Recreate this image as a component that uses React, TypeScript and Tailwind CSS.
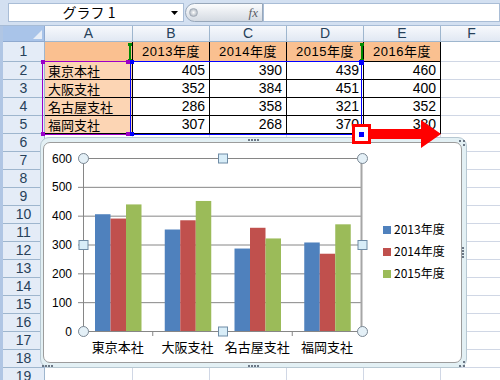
import React from 'react';

const cols = ['A', 'B', 'C', 'D', 'E', 'F'];

const table = [
  ['', '2013年度', '2014年度', '2015年度', '2016年度'],
  ['東京本社', '405', '390', '439', '460'],
  ['大阪支社', '352', '384', '451', '400'],
  ['名古屋支社', '286', '358', '321', '352'],
  ['福岡支社', '307', '268', '370', '380'],
];

const branches = ['東京本社', '大阪支社', '名古屋支社', '福岡支社'];
const series = [
  { name: '2013年度', color: '#4f81bd', values: [405, 352, 286, 307] },
  { name: '2014年度', color: '#c0504d', values: [390, 384, 358, 268] },
  { name: '2015年度', color: '#9bbb59', values: [439, 451, 321, 370] },
];

// plot area in page coordinates
const X0 = 83;
const X1 = 362;
const Y0 = 157;
const Y1 = 330;
const catW = (X1 - X0) / 4;
const yOf = (v: number) => Y1 - (v / 600) * (Y1 - Y0);

const Cell = ({ r, c }: { r: number; c: number }) => {
  const inTable = r <= 5 && c <= 4;
  const text = inTable ? table[r - 1][c] : '';
  let cls = 'border-r border-b border-[#d0d7e5] bg-white';
  if (inTable) {
    if (r === 1)
      cls =
        "border-r border-b border-black bg-[#fac090] justify-center tracking-[0.5px] font-['Liberation_Sans','Noto_Sans_CJK_JP',sans-serif]";
    else if (c === 0) cls = 'border-r border-b border-black bg-[#fcd5b4] justify-start pl-[3px]';
    else
      cls =
        "border-r border-b border-black bg-white justify-end pr-[4px] text-[14px] font-['Liberation_Sans',sans-serif]";
  }
  return (
    <div className={`${cls} flex items-center text-[13px] leading-[15px] text-black whitespace-nowrap`}>
      {text}
    </div>
  );
};

const Chart = () => (
  <svg className="absolute inset-0" width="418" height="223" viewBox="44 142 418 223">
    {[0, 100, 200, 300, 400, 500, 600].map((v) => (
      <g key={v}>
        <line x1={X0 - 5} x2={X1} y1={yOf(v) + 0.5} y2={yOf(v) + 0.5} stroke="#868686" strokeWidth="1" />
        <text
          x={72}
          y={yOf(v) + 4.5}
          textAnchor="end"
          fontSize="12"
          fontFamily="'Liberation Sans', Arial, sans-serif"
          fill="#000"
        >
          {v}
        </text>
      </g>
    ))}
    {series.map((s, si) =>
      s.values.map((v, ci) => {
        const x = X0 + ci * catW + 12 + si * 15.5;
        return <rect key={`${si}-${ci}`} x={x} y={yOf(v)} width={15.5} height={Y1 - yOf(v)} fill={s.color} />;
      }),
    )}
    <line x1={X0 + 0.5} x2={X0 + 0.5} y1={Y0} y2={Y1} stroke="#868686" />
    <line x1={X1 - 0.5} x2={X1 - 0.5} y1={Y0} y2={Y1} stroke="#a6a6a6" strokeWidth="2" />
    {[1, 2, 3].map((i) => (
      <line key={i} x1={X0 + i * catW} x2={X0 + i * catW} y1={Y1} y2={Y1 + 5} stroke="#868686" />
    ))}
    {branches.map((b, i) => (
      <text
        key={b}
        x={X0 + i * catW + catW / 2}
        y={351}
        textAnchor="middle"
        fontSize="13"
        fontFamily="'Noto Sans CJK JP', sans-serif"
        fill="#000"
      >
        {b}
      </text>
    ))}
    {series.map((s, i) => (
      <g key={s.name}>
        <rect x={383} y={225 + i * 22} width={8} height={8} fill={s.color} />
        <text x={394} y={233 + i * 22} fontSize="12" fontFamily="'Noto Sans CJK JP', sans-serif" fill="#000">
          {s.name}
        </text>
      </g>
    ))}
    {[
      [X0, Y0],
      [X1, Y0],
      [X0, Y1],
      [X1, Y1],
    ].map(([x, y], i) => (
      <circle key={i} cx={x + 0.5} cy={y + 0.5} r={5} fill="#e4f0f7" stroke="#7b8894" />
    ))}
    {[
      [(X0 + X1) / 2, Y0],
      [(X0 + X1) / 2, Y1],
      [X0, (Y0 + Y1) / 2],
      [X1, (Y0 + Y1) / 2],
    ].map(([x, y], i) => (
      <rect key={i} x={x - 4} y={y - 4} width={9} height={9} fill="#d8edf8" stroke="#6f8ca6" />
    ))}
  </svg>
);

const Dots = ({ className }: { className: string }) => (
  <div className={`absolute flex gap-[1px] ${className}`}>
    <span className="w-[2px] h-[2px] bg-[#6b7785]" />
    <span className="w-[2px] h-[2px] bg-[#6b7785]" />
    <span className="w-[2px] h-[2px] bg-[#6b7785]" />
    <span className="w-[2px] h-[2px] bg-[#6b7785]" />
  </div>
);

export default function App() {
  const sheetRows = Array.from({ length: 19 }, (_, i) => i + 1);
  return (
    <div className="relative w-[500px] h-[380px] overflow-hidden bg-white font-['Noto_Sans_CJK_JP',sans-serif]">
      {/* formula bar */}
      <div className="h-[26px] bg-[#d3e0f1] border-b border-[#a7bcd6] flex items-start pt-[3px] pl-[8px]">
        <div className="w-[176px] h-[19px] bg-white border border-[#a9bdd6] flex items-center">
          <span className="flex-1 text-center text-[14px] leading-[17px] pl-[4px]">グラフ 1</span>
          <span className="w-[18px] flex justify-center">
            <svg width="7" height="4" viewBox="0 0 7 4">
              <path d="M0 0h7L3.5 4z" fill="#000" />
            </svg>
          </span>
        </div>
        <div className="ml-[1px] w-[78px] h-[19px] rounded-l-full border border-[#97a7ba] bg-linear-to-b from-[#fbfcfd] to-[#d5dbe3] flex items-center justify-between pl-[3px] pr-[4px]">
          <span className="w-[9px] h-[9px] rounded-full bg-radial from-[#ffffff] to-[#9aa4b0] border border-[#a4adb8]" />
          <span className="font-['Liberation_Serif',serif] italic text-[13px] leading-none text-[#5a5f66]">fx</span>
        </div>
        <div className="flex-1 h-[19px] bg-white border border-[#a9bdd6]" />
      </div>

      {/* sheet grid */}
      <div className="grid grid-cols-[42px_88px_77px_77px_77px_77px_62px] grid-rows-[16px_20px_repeat(18,18px)] border-l-[3px] border-[#b0c6e4]">
        <div className="bg-[#a9c4e9] border-r border-b border-[#8faad0] flex items-end justify-end p-[2px]">
          <svg width="9" height="9" viewBox="0 0 9 9">
            <path d="M9 0v9H0z" fill="#e8eef7" />
          </svg>
        </div>
        {cols.map((c) => (
          <div
            key={c}
            className="bg-linear-to-b from-[#f7f9fc] to-[#e1e8f3] border-r border-b border-[#9eb6ce] text-center text-[14px] leading-[15px] text-[#27415a] font-['Liberation_Sans',sans-serif]"
          >
            {c}
          </div>
        ))}
        {sheetRows.map((r) => (
          <React.Fragment key={r}>
            <div className="bg-[#e4ecf7] border-r border-b border-[#9eb6ce] flex items-center justify-center text-[14px] leading-[15px] text-[#27415a] font-['Liberation_Sans',sans-serif]">
              {r}
            </div>
            {[0, 1, 2, 3, 4, 5].map((c) => (
              <Cell key={c} r={r} c={c} />
            ))}
          </React.Fragment>
        ))}
      </div>

      {/* series name range (green) */}
      <div className="absolute left-[129px] top-[43px] w-[2px] h-[19px] bg-[#008a00]" />
      <div className="absolute left-[128px] top-[43px] w-[4px] h-[3px] bg-[#008a00]" />
      <div className="absolute left-[128px] top-[59px] w-[4px] h-[3px] bg-[#008a00]" />
      <div className="absolute left-[361px] top-[43px] w-[2px] h-[19px] bg-[#008a00]" />
      <div className="absolute left-[360px] top-[43px] w-[4px] h-[3px] bg-[#008a00]" />
      <div className="absolute left-[360px] top-[59px] w-[4px] h-[3px] bg-[#008a00]" />

      {/* category range (purple) */}
      <div className="absolute left-[42px] top-[61px] w-[89px] h-[74px] border border-[#9a00c8]" />
      <div className="absolute left-[41px] top-[60px] w-[4px] h-[4px] bg-[#9a00c8]" />
      <div className="absolute left-[126px] top-[60px] w-[4px] h-[4px] bg-[#9a00c8]" />
      <div className="absolute left-[41px] top-[132px] w-[4px] h-[4px] bg-[#9a00c8]" />
      <div className="absolute left-[126px] top-[132px] w-[4px] h-[4px] bg-[#9a00c8]" />

      {/* value range (blue) */}
      <div className="absolute left-[130px] top-[61px] w-[232px] h-[74px] border border-[#0000ff]" />
      <div className="absolute left-[130px] top-[60px] w-[4px] h-[4px] bg-[#0000ff]" />
      <div className="absolute left-[359px] top-[60px] w-[5px] h-[5px] bg-[#0000ff]" />
      <div className="absolute left-[130px] top-[132px] w-[4px] h-[4px] bg-[#0000ff]" />

      {/* chart object */}
      <div className="absolute left-[40px] top-[137px] w-[427px] h-[231px] rounded-[9px] border border-[#b7c8d2] bg-[#e3f0f4] pt-[4px] pr-[4px] pb-[4px] pl-[2px]">
        <div className="relative w-full h-full overflow-hidden rounded-[7px] border border-[#9c9c9c] bg-white">
          <Chart />
        </div>
      </div>
      <Dots className="left-[248px] top-[139px]" />
      <Dots className="left-[248px] top-[365px]" />
      <Dots className="left-[42px] top-[365px]" />
      <div className="absolute left-[462px] top-[247px] flex flex-col gap-[1px]">
        <span className="w-[2px] h-[2px] bg-[#6b7785]" />
        <span className="w-[2px] h-[2px] bg-[#6b7785]" />
        <span className="w-[2px] h-[2px] bg-[#6b7785]" />
        <span className="w-[2px] h-[2px] bg-[#6b7785]" />
      </div>
      <div className="absolute left-[459px] top-[140px] w-[6px] h-[6px] grid grid-cols-2 gap-[2px]">
        <span className="bg-[#6b7785]" />
        <span className="bg-[#6b7785]" />
        <span />
        <span className="bg-[#6b7785]" />
      </div>
      <div className="absolute left-[459px] top-[361px] w-[6px] h-[6px] grid grid-cols-2 gap-[2px]">
        <span />
        <span className="bg-[#6b7785]" />
        <span className="bg-[#6b7785]" />
        <span className="bg-[#6b7785]" />
      </div>

      {/* red box and arrow */}
      <div className="absolute left-[352px] top-[124px] w-[19px] h-[20px] border-[3px] border-[#ff0000] bg-white flex items-center justify-center">
        <span className="w-[5px] h-[5px] bg-[#0000ff] -ml-[1px]" />
      </div>
      <svg className="absolute left-[370px] top-[119px]" width="72" height="30" viewBox="0 0 72 30">
        <path d="M0 10h51V1l20 14-20 14v-9H0z" fill="#ff0000" />
      </svg>
    </div>
  );
}
